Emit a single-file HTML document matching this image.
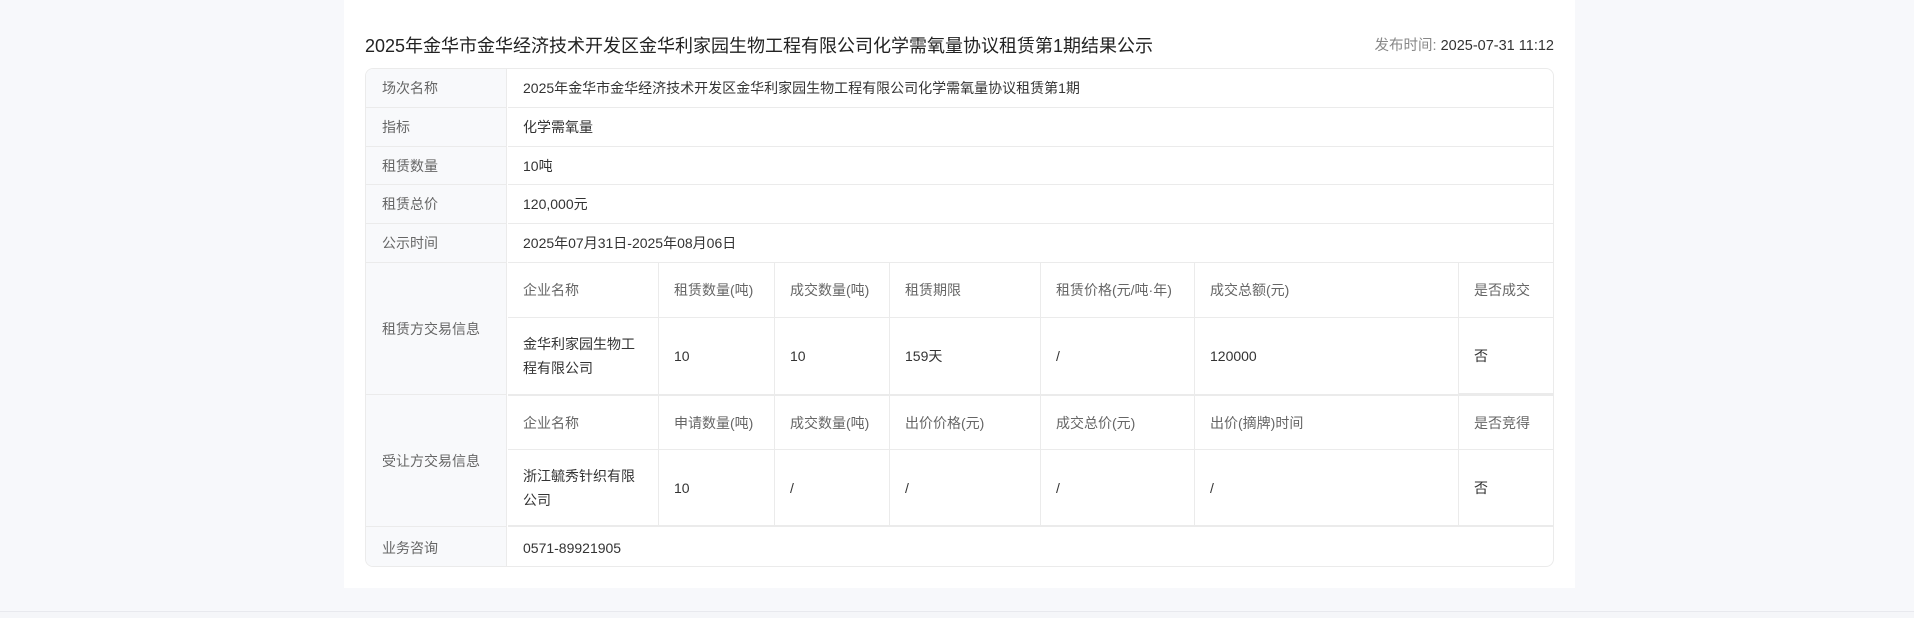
<!DOCTYPE html><html><head><meta charset="utf-8"><style>
*{margin:0;padding:0;box-sizing:border-box}
body{width:1914px;height:618px;background:#f7f8fb;position:relative;overflow:hidden;font-family:"Liberation Sans","Noto Sans CJK SC",sans-serif}
.card{position:absolute;left:344px;top:0;width:1231px;height:588px;background:#fff}
.foot{position:absolute;left:0;top:611px;width:1914px;height:7px;border-top:1px solid #e8e9ee;background:#f5f6f9}
.t{position:absolute;white-space:nowrap}
.title{left:365px;top:32px;font-size:18px;color:#222}
.pub{right:360px;top:34px;font-size:14.5px;color:#333}
.pub span{color:#888}
.tbl{position:absolute;left:365px;top:68px;width:1189px;height:499px;border:1px solid #ebebeb;border-radius:8px;overflow:hidden}
.lab{position:absolute;left:0;width:141px;background:#f8f9fb;border-right:1px solid #ebebeb;border-bottom:1px solid #ebebeb;color:#666;font-size:14px;padding-left:16px;display:flex;align-items:center}
.val{position:absolute;left:142px;right:0;border-bottom:1px solid #ebebeb;color:#333;font-size:14px;padding-left:15px;display:flex;align-items:center}
.c{position:absolute;border-right:1px solid #ebebeb;border-bottom:1px solid #ebebeb;font-size:14px;padding-left:15px;display:flex;align-items:center;line-height:24px}
.h{color:#666}.d{color:#333}
</style></head><body>
<div class="card"></div>
<div class="foot"></div>
<div class="t title">2025年金华市金华经济技术开发区金华利家园生物工程有限公司化学需氧量协议租赁第1期结果公示</div>
<div class="t pub"><span>发布时间: </span>2025-07-31 11:12</div>
<div class="tbl">
<div class="lab" style="top:0;height:39px">场次名称</div><div class="val" style="top:0;height:39px">2025年金华市金华经济技术开发区金华利家园生物工程有限公司化学需氧量协议租赁第1期</div>
<div class="lab" style="top:39px;height:39px">指标</div><div class="val" style="top:39px;height:39px">化学需氧量</div>
<div class="lab" style="top:78px;height:38px">租赁数量</div><div class="val" style="top:78px;height:38px">10吨</div>
<div class="lab" style="top:116px;height:39px">租赁总价</div><div class="val" style="top:116px;height:39px">120,000元</div>
<div class="lab" style="top:155px;height:39px">公示时间</div><div class="val" style="top:155px;height:39px">2025年07月31日-2025年08月06日</div>
<div class="lab" style="top:194px;height:132px">租赁方交易信息</div>
<div class="lab" style="top:326px;height:132px">受让方交易信息</div>
<div class="lab" style="top:458px;height:41px;border-bottom:0">业务咨询</div><div class="val" style="top:458px;height:41px;border-bottom:0">0571-89921905</div>
<div class="c h" style="top:194px;left:142px;width:151px;height:55px">企业名称</div>
<div class="c h" style="top:194px;left:293px;width:116px;height:55px">租赁数量(吨)</div>
<div class="c h" style="top:194px;left:409px;width:115px;height:55px">成交数量(吨)</div>
<div class="c h" style="top:194px;left:524px;width:151px;height:55px">租赁期限</div>
<div class="c h" style="top:194px;left:675px;width:154px;height:55px">租赁价格(元/吨·年)</div>
<div class="c h" style="top:194px;left:829px;width:264px;height:55px">成交总额(元)</div>
<div class="c h" style="top:194px;left:1093px;width:95px;height:55px">是否成交</div>
<div class="c d" style="top:249px;left:142px;width:151px;height:77px;padding-right:12px;white-space:normal">金华利家园生物工程有限公司</div>
<div class="c d" style="top:249px;left:293px;width:116px;height:77px">10</div>
<div class="c d" style="top:249px;left:409px;width:115px;height:77px">10</div>
<div class="c d" style="top:249px;left:524px;width:151px;height:77px">159天</div>
<div class="c d" style="top:249px;left:675px;width:154px;height:77px">/</div>
<div class="c d" style="top:249px;left:829px;width:264px;height:77px">120000</div>
<div class="c d" style="top:249px;left:1093px;width:95px;height:77px;border-bottom:2px solid #ebebeb">否</div>
<div class="c h" style="top:326px;left:142px;width:151px;height:55px;border-top:1px solid #ebebeb">企业名称</div>
<div class="c h" style="top:326px;left:293px;width:116px;height:55px;border-top:1px solid #ebebeb">申请数量(吨)</div>
<div class="c h" style="top:326px;left:409px;width:115px;height:55px;border-top:1px solid #ebebeb">成交数量(吨)</div>
<div class="c h" style="top:326px;left:524px;width:151px;height:55px;border-top:1px solid #ebebeb">出价价格(元)</div>
<div class="c h" style="top:326px;left:675px;width:154px;height:55px;border-top:1px solid #ebebeb">成交总价(元)</div>
<div class="c h" style="top:326px;left:829px;width:264px;height:55px;border-top:1px solid #ebebeb">出价(摘牌)时间</div>
<div class="c h" style="top:326px;left:1093px;width:95px;height:55px;border-top:1px solid #ebebeb">是否竞得</div>
<div class="c d" style="top:381px;left:142px;width:151px;height:77px;padding-right:12px;white-space:normal;border-bottom:2px solid #ebebeb">浙江毓秀针织有限公司</div>
<div class="c d" style="top:381px;left:293px;width:116px;height:77px;border-bottom:2px solid #ebebeb">10</div>
<div class="c d" style="top:381px;left:409px;width:115px;height:77px;border-bottom:2px solid #ebebeb">/</div>
<div class="c d" style="top:381px;left:524px;width:151px;height:77px;border-bottom:2px solid #ebebeb">/</div>
<div class="c d" style="top:381px;left:675px;width:154px;height:77px;border-bottom:2px solid #ebebeb">/</div>
<div class="c d" style="top:381px;left:829px;width:264px;height:77px;border-bottom:2px solid #ebebeb">/</div>
<div class="c d" style="top:381px;left:1093px;width:95px;height:77px;border-bottom:2px solid #ebebeb">否</div>
</div>
</body></html>
